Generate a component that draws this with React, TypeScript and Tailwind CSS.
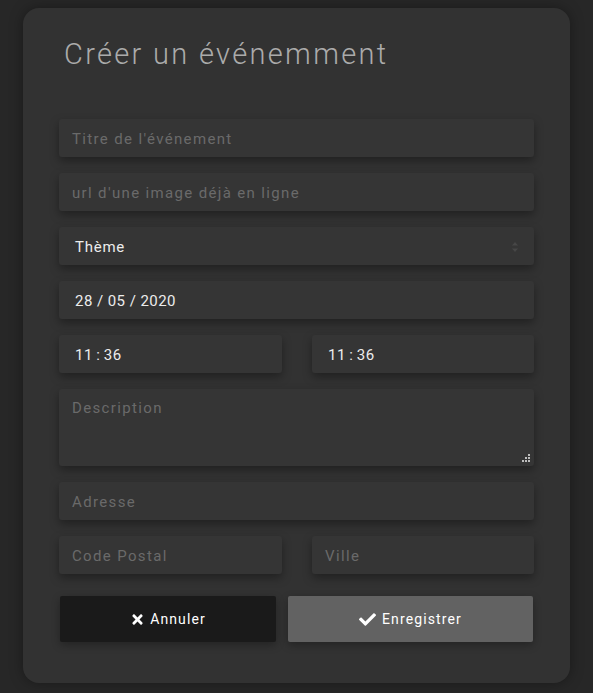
import React from "react";
import { FaTimes, FaCheck } from "react-icons/fa";

const field =
  "h-[38px] min-w-0 rounded-[3px] bg-[#353535] shadow-[0_4px_10px_rgba(0,0,0,0.35)] flex items-center pt-[2px] text-[15px]";

function Placeholder({ text, className = "" }: { text: string; className?: string }) {
  return (
    <div className={`${field} px-[13px] tracking-[0.09em] ${className}`}>
      <span className="text-[#6a6a6a]">{text}</span>
    </div>
  );
}

function Value({ text, className = "" }: { text: string; className?: string }) {
  return (
    <div className={`${field} px-[16px] tracking-[0.03em] ${className}`}>
      <span className="text-[#ececec]">{text}</span>
    </div>
  );
}

export default function App() {
  return (
    <div
      className="min-h-[693px] w-full bg-[#272727] pt-[8px] pl-[23px] pr-[23px] pb-[10px]"
      style={{ fontFamily: "Roboto, 'Open Sans', sans-serif" }}
    >
      <div className="w-[547px] rounded-[16px] bg-[#323232] shadow-[0_0_14px_rgba(0,0,0,0.35)] pt-[28px] pb-[41px] pl-[36px] pr-[36px]">
        <h1 className="pl-[5px] text-[29px] font-light tracking-[0.08em] text-[#ababab] leading-[36px]">
          Créer un événemment
        </h1>

        <div className="mt-[47px] flex flex-col gap-[16px]">
          <Placeholder text="Titre de l'événement" />
          <Placeholder text="url d'une image déjà en ligne" />

          <div className={`${field} px-[16px] justify-between tracking-[0.05em]`}>
            <span className="text-[#ececec]">Thème</span>
            <svg width="8" height="12" viewBox="0 0 8 12" className="mr-[-1px]">
              <path d="M4 1 L7 4.5 H1 Z" fill="#474747" />
              <path d="M4 11 L7 7.5 H1 Z" fill="#474747" />
            </svg>
          </div>

          <Value text="28 / 05 / 2020" />

          <div className="flex gap-[30px]">
            <Value text={"11\u2009:\u200936"} className="w-[223px] flex-none" />
            <Value text={"11\u2009:\u200936"} className="flex-1" />
          </div>

          <div className="relative h-[77px] rounded-[3px] bg-[#353535] shadow-[0_4px_10px_rgba(0,0,0,0.35)] px-[13px] pt-[8px] text-[15px] tracking-[0.09em]">
            <span className="text-[#6a6a6a]">Description</span>
            <svg width="9" height="9" viewBox="0 0 9 9" className="absolute right-[3px] bottom-[3px]">
              <rect x="6" y="0" width="2" height="2" fill="#bdbdbd" />
              <rect x="3" y="3" width="2" height="2" fill="#bdbdbd" />
              <rect x="6" y="3" width="2" height="2" fill="#bdbdbd" />
              <rect x="0" y="6" width="2" height="2" fill="#bdbdbd" />
              <rect x="3" y="6" width="2" height="2" fill="#bdbdbd" />
              <rect x="6" y="6" width="2" height="2" fill="#bdbdbd" />
            </svg>
          </div>

          <Placeholder text="Adresse" />

          <div className="flex gap-[30px]">
            <Placeholder text="Code Postal" className="w-[223px] flex-none" />
            <Placeholder text="Ville" className="flex-1" />
          </div>
        </div>

        <div className="mt-[22px] flex gap-[12px] pl-[1px] pr-[1px]">
          <button className="flex h-[46px] w-[216px] items-center justify-center gap-[5px] rounded-[2px] bg-[#1a1a1a] text-[14px] font-normal tracking-[0.08em] text-white shadow-[0_3px_8px_rgba(0,0,0,0.3)]">
            <FaTimes size={15} />
            Annuler
          </button>
          <button className="flex h-[46px] flex-1 items-center justify-center gap-[6px] rounded-[2px] bg-[#626262] text-[14px] font-normal tracking-[0.08em] text-white shadow-[0_3px_8px_rgba(0,0,0,0.3)]">
            <FaCheck size={17} />
            Enregistrer
          </button>
        </div>
      </div>
    </div>
  );
}
